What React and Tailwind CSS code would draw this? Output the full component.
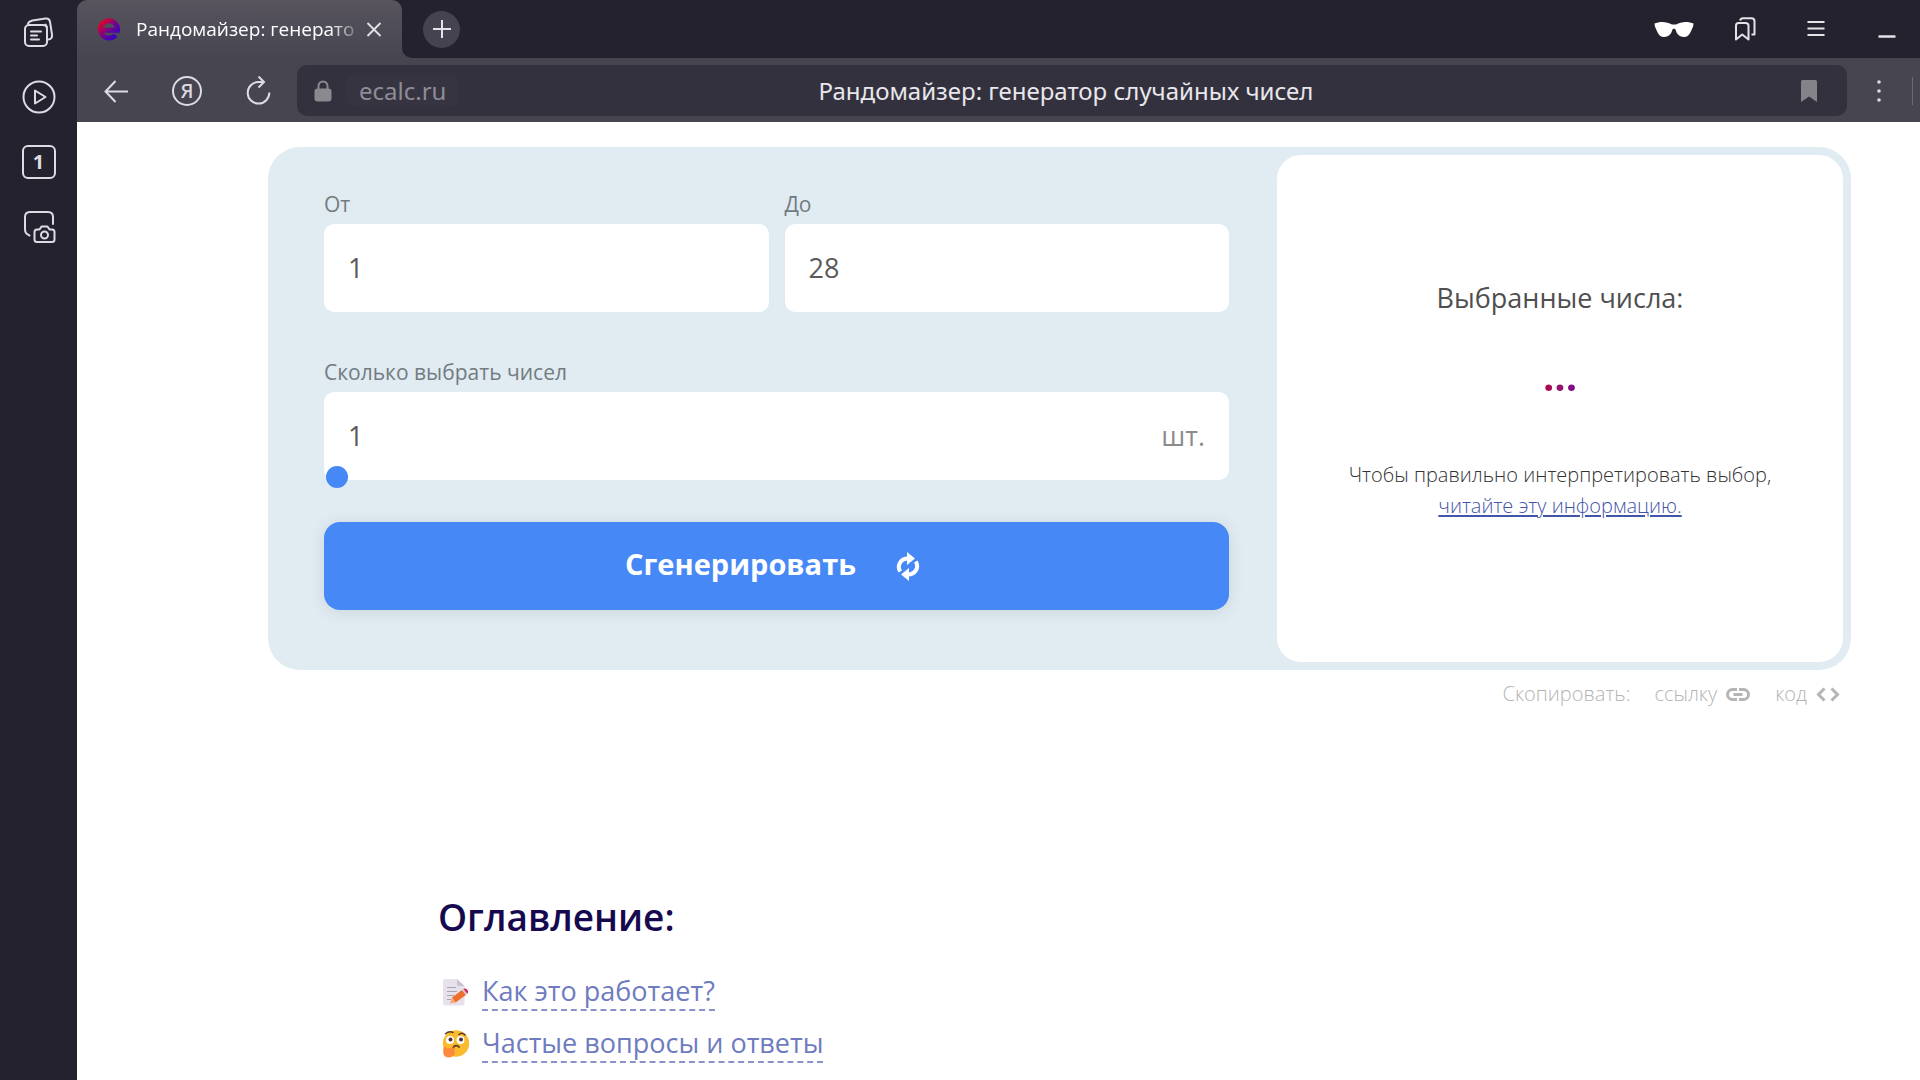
import { useState } from "react";

// ─── Sidebar ───────────────────────────────────────────────────────────────
const SideButton = ({ label, children }) => (
  <button aria-label={label} className="flex h-9 w-9 items-center justify-center text-[#dddbe3]">
    {children}
  </button>
);

const Sidebar = () => (
  <aside className="flex w-[77px] shrink-0 flex-col items-center gap-7 bg-[#24222e] pt-4">
    <SideButton label="Коллекции">
      <svg className="h-9 w-9" viewBox="0 0 36 36" fill="none" stroke="currentColor" strokeWidth="2" strokeLinecap="round" strokeLinejoin="round">
        <rect x="4" y="9" width="22" height="21" rx="4" />
        <path d="M7 7.500C8 5.500 9.500 5 11.500 4.500L24.500 2.600C27 2.400 28.600 3.400 29 5.900L31 18.500C31.400 21.500 30.500 23 27.500 23.600" />
        <path d="M26 11L24.500 8.500" />
        <path d="M10 15.500h10M10 19.500h6M10 23.500h8" />
      </svg>
    </SideButton>
    <SideButton label="Видео">
      <svg className="h-9 w-9" viewBox="0 0 36 36" fill="none" stroke="currentColor" strokeWidth="2" strokeLinejoin="round">
        <circle cx="18" cy="17" r="15.500" />
        <path d="M14 10.500V23.500L24.500 17Z" />
      </svg>
    </SideButton>
    <SideButton label="Вкладки">
      <span className="flex h-[34px] w-[34px] items-center justify-center rounded-[6px] border-2 border-[#dddbe3] font-['Open_Sans','Liberation_Sans',sans-serif] text-xl font-bold leading-none">
        1
      </span>
    </SideButton>
    <SideButton label="Скриншот">
      <svg className="h-9 w-9" viewBox="0 0 36 36" fill="none" stroke="currentColor" strokeWidth="2" strokeLinecap="round" strokeLinejoin="round">
        <path d="M8.500 27.500C5.500 26 4 25 4 21V9C4 5.500 5.500 4 9 4H27C30.500 4 32 5.500 32 9V16" />
        <path d="M16 21.500H18.500L20.500 18.500H26.500L28.500 21.500H31C32.500 21.500 33.500 22.500 33.500 24V31.500C33.500 33 32.500 34 31 34H16C14.500 34 13.500 33 13.500 31.500V24C13.500 22.500 14.500 21.500 16 21.500Z" />
        <circle cx="23.500" cy="27" r="3.500" />
      </svg>
    </SideButton>
  </aside>
);

// ─── Tab strip ─────────────────────────────────────────────────────────────
const SiteLogo = () => (
  <svg className="h-6 w-6 shrink-0" viewBox="0 0 24 24" fill="none">
    <defs>
      <linearGradient id="site-logo" gradientUnits="userSpaceOnUse" x1="3" y1="3" x2="20" y2="20">
        <stop offset="0.150" stopColor="#d8002f" />
        <stop offset="0.600" stopColor="#6a0596" />
        <stop offset="1" stopColor="#3300c4" />
      </linearGradient>
    </defs>
    <path d="M5 13.200H20.500A8.600 8.600 0 1 0 18.500 18" stroke="url(#site-logo)" strokeWidth="5" />
  </svg>
);

const TabStrip = () => (
  <div className="flex h-[58px] bg-[#474550]">
    <div className="bg-[#24222e]">
      <div className="flex h-full w-[325px] items-center rounded-t-[10px] bg-gradient-to-b from-[#57545e] to-[#474550] pl-5 pr-[18px]">
        <SiteLogo />
        <span className="ml-[15px] flex-1 whitespace-nowrap pt-px font-['Open_Sans',sans-serif] text-[19px] font-medium text-white [mask-image:linear-gradient(to_right,#000_85%,transparent)]">
          Рандомайзер: генерато
        </span>
        <button aria-label="Закрыть вкладку" className="text-[#e4e3e8]">
          <svg className="h-5 w-5" viewBox="0 0 20 20" fill="none" stroke="currentColor" strokeWidth="1.800">
            <path d="M3.500 4L16.500 17M16.500 4L3.500 17" />
          </svg>
        </button>
      </div>
    </div>
    <div className="flex flex-1 items-center rounded-bl-[10px] bg-[#24222e] pl-[21px] pr-[23px] text-[#e4e3e8]">
      <button aria-label="Новая вкладка" className="flex h-[37px] w-[37px] items-center justify-center rounded-full bg-[#45434f]">
        <svg className="h-5 w-5" viewBox="0 0 20 20" fill="none" stroke="currentColor" strokeWidth="2">
          <path d="M10 1V19M1 10H19" />
        </svg>
      </button>
      <div className="ml-auto flex items-center">
        <button aria-label="Инкогнито" className="text-white">
          <svg className="h-5 w-10" viewBox="0 0 40 20" fill="currentColor">
            <path d="M0.500 4.500C5 2.200 13 2.200 18 5.500H22C27 2.200 35 2.200 39.500 4.500L39 8C37.500 9.500 36.500 18 30 18C24.500 18 22.500 14 21.500 10.500C21.200 9.500 18.800 9.500 18.500 10.500C17.500 14 15.500 18 10 18C3.500 18 2.500 9.500 1 8Z" />
          </svg>
        </button>
        <button aria-label="Закладки" className="ml-[39px]">
          <svg className="h-6 w-6" viewBox="0 0 24 24" fill="none" stroke="currentColor" strokeWidth="2" strokeLinejoin="round">
            <path d="M3 8.500C3 6.800 4 6 5.500 6H12.500C14.500 6 15.500 6.800 15.500 8.500V22.500L9.200 17.500L3 22.500Z" />
            <path d="M7 3.500C7.500 2 8.500 1.200 10 1.200H18.500C20.500 1.200 21.500 2.200 21.500 4.200V17.500H18.500" />
          </svg>
        </button>
        <button aria-label="Меню" className="ml-[49px]">
          <svg className="h-5 w-5" viewBox="0 0 20 20" fill="none" stroke="currentColor" strokeWidth="2">
            <path d="M1.500 3H18.500M1.500 9.500H18.500M1.500 16H18.500" />
          </svg>
        </button>
        <button aria-label="Свернуть" className="ml-[51px]">
          <svg className="h-5 w-5" viewBox="0 0 20 20" fill="none" stroke="currentColor" strokeWidth="2.500">
            <path d="M1.500 17.500H18.500" />
          </svg>
        </button>
      </div>
    </div>
  </div>
);

// ─── Address bar ───────────────────────────────────────────────────────────
const Toolbar = () => (
  <div className="flex h-16 items-center bg-[#474550] pl-6 pt-px text-[#dddbe3]">
    <button aria-label="Назад">
      <svg className="h-[30px] w-[30px]" viewBox="0 0 30 30" fill="none" stroke="currentColor" strokeWidth="2">
        <path d="M14.500 5L4.500 15.500L14.500 26M4.500 15.500H27" />
      </svg>
    </button>
    <button aria-label="Яндекс" className="ml-[41px] flex h-[30px] w-[30px] items-center justify-center rounded-full border-2 border-[#dddbe3] text-xl font-medium leading-none">
      Я
    </button>
    <button aria-label="Обновить" className="ml-[41px]">
      <svg className="h-[30px] w-[30px]" viewBox="0 0 30 30" fill="none" stroke="currentColor" strokeWidth="2">
        <path d="M20 6H15.500A10.800 10.800 0 1 0 26.300 16.500" />
        <path d="M15.500 0.500L21 6L15.500 11.500" />
      </svg>
    </button>
    <div className="ml-6 grid h-[51px] flex-1 grid-cols-[1fr_auto_1fr] items-center rounded-[10px] bg-[#34313e] pl-[17px] pr-[29px]">
      <div className="flex items-center">
        <svg className="h-[22px] w-[18px] shrink-0 text-[#8b8990]" viewBox="0 0 18 22" fill="none">
          <path d="M4.500 9V6A4.500 4.500 0 0 1 13.500 6V9" stroke="currentColor" strokeWidth="2" />
          <rect x="0.500" y="8.500" width="17" height="13" rx="3" fill="currentColor" />
        </svg>
        <span className="ml-[15px] rounded-lg bg-[#373441] px-3 text-2xl text-[#8f8c97]">ecalc.ru</span>
      </div>
      <span className="text-2xl text-[#e8e7ec]">Рандомайзер: генератор случайных чисел</span>
      <button aria-label="В закладки" className="justify-self-end text-[#85838a]">
        <svg className="h-6 w-[18px]" viewBox="0 0 18 24" fill="currentColor">
          <path d="M1 3C1 1.500 1.800 1 3 1H15C16.200 1 17 1.500 17 3V23L9 17.500L1 23Z" />
        </svg>
      </button>
    </div>
    <button aria-label="Ещё" className="ml-[22px]">
      <svg className="h-6 w-5" viewBox="0 0 20 24" fill="currentColor">
        <circle cx="10" cy="3" r="1.800" />
        <circle cx="10" cy="12" r="1.800" />
        <circle cx="10" cy="21" r="1.800" />
      </svg>
    </button>
    <span className="ml-[23px] mr-[7px] h-7 w-px bg-[#6c6a74]" />
  </div>
);

// ─── Generator form ────────────────────────────────────────────────────────
const Field = ({ id, label, value, onChange, suffix, children }) => (
  <div className="min-w-0 flex-1">
    <label htmlFor={id} className="block text-[21px] leading-7 text-[#737b80]">{label}</label>
    <div className="relative mt-1.5">
      <div className="flex h-[88px] items-center rounded-[10px] bg-white px-6 text-[27px] text-[#5a5a5a]">
        <input id={id} type="text" inputMode="numeric" value={value}
          onChange={(e) => onChange(e.target.value)}
          className="min-w-0 flex-1 bg-transparent outline-none" />
        {suffix && <span className="text-[#8c8c8c]">{suffix}</span>}
      </div>
      {children}
    </div>
  </div>
);

const RefreshIcon = () => (
  <svg className="h-8 w-8" viewBox="0 0 32 32" fill="none" stroke="currentColor" strokeWidth="4">
    <path d="M8.200 21.500C4.500 15 9 8.500 16 8.500" />
    <path d="M23.800 11.500C27.500 18 23 24.500 16 24.500" />
    <path d="M15 2L23 8.500L15 15Z" fill="currentColor" stroke="none" />
    <path d="M17 18L9 24.500L17 31Z" fill="currentColor" stroke="none" />
  </svg>
);

const Generator = () => {
  const [from, setFrom] = useState("1");
  const [to, setTo] = useState("28");
  const [count, setCount] = useState("1");
  const [picked, setPicked] = useState([]);

  const generate = (e) => {
    e.preventDefault();
    const min = Number(from);
    const size = Math.max(Number(to) - min + 1, 1);
    setPicked(Array.from({ length: Number(count) }, () => min + Math.floor(Math.random() * size)));
  };

  return (
    <section className="flex rounded-[32px] bg-[#e0ebf2] py-2 pl-14 pr-2">
      <form onSubmit={generate} className="flex flex-1 flex-col pr-12 pt-[35px]">
        <div className="flex gap-4">
          <Field id="from" label="От" value={from} onChange={setFrom} />
          <Field id="to" label="До" value={to} onChange={setTo} />
        </div>
        <div className="mt-[46px] flex">
          <Field id="count" label="Сколько выбрать чисел" value={count} onChange={setCount} suffix="шт.">
            <input type="range" min="1" max="28" value={count} aria-label="Сколько выбрать чисел"
              onChange={(e) => setCount(e.target.value)}
              className="absolute inset-x-0.5 -bottom-2 h-[22px] appearance-none bg-transparent [&::-webkit-slider-thumb]:h-[22px] [&::-webkit-slider-thumb]:w-[22px] [&::-webkit-slider-thumb]:appearance-none [&::-webkit-slider-thumb]:rounded-full [&::-webkit-slider-thumb]:bg-[#4688f6]" />
          </Field>
        </div>
        <button type="submit"
          className="mt-[42px] flex h-[88px] items-center justify-center gap-9 rounded-2xl bg-[#4688f6] pr-1 text-[29px] font-bold text-white shadow-[0_2px_16px_rgba(60,70,60,0.12)]">
          <span className="pb-1">Сгенерировать</span>
          <RefreshIcon />
        </button>
      </form>

      <div className="flex min-h-[507px] w-[566px] flex-col items-center rounded-[24px] bg-white pt-[123px] text-center">
        <p className="text-[27px] leading-10 text-[#4f4f4f]">Выбранные числа:</p>
        <output className="mt-[33px] bg-gradient-to-r from-[#b00040] to-[#7a0090] bg-clip-text text-[40px] font-bold leading-[50px] text-transparent">
          {picked.length ? picked.join(", ") : "..."}
        </output>
        <p className="mt-[58px] text-xl font-light leading-[31px] text-[#333333]">
          Чтобы правильно интерпретировать выбор,
          <br />
          <a href="#info" className="text-[#4355a8] underline underline-offset-2">читайте эту информацию.</a>
        </p>
      </div>
    </section>
  );
};

const CopyLinks = () => (
  <div className="mt-2.5 flex items-center justify-end pr-2.5 text-xl font-light text-[#b5b5b5]">
    <span>Скопировать:</span>
    <button className="ml-6 flex items-center gap-2">
      ссылку
      <svg className="h-[26px] w-[26px]" viewBox="0 0 26 26" fill="none" stroke="currentColor" strokeWidth="3">
        <path d="M12 8.500H7.500A5 5 0 0 0 7.500 18.500H12M14 8.500H18.500A5 5 0 0 1 18.500 18.500H14M8.500 13.500H17.500" />
      </svg>
    </button>
    <button className="ml-6 flex items-center gap-2">
      код
      <svg className="h-[26px] w-[26px]" viewBox="0 0 26 26" fill="none" stroke="currentColor" strokeWidth="3">
        <path d="M9.500 7.500L3.500 13.500L9.500 19.500M16.500 7.500L22.500 13.500L16.500 19.500" />
      </svg>
    </button>
  </div>
);

// ─── Contents ──────────────────────────────────────────────────────────────
const MemoIcon = () => (
  <svg className="h-7 w-7 shrink-0" viewBox="0 0 28 28" fill="none">
    <path d="M3 1H15L22.500 8V25.500A2 2 0 0 1 20.500 27.500H3A2 2 0 0 1 1 25.500V3A2 2 0 0 1 3 1Z" fill="#e6e1ea" />
    <path d="M15 1V6A2 2 0 0 0 17 8H22.500Z" fill="#c9c1d1" />
    <path d="M5 9.500H14M5 13.500H15M5 17.500H12M5 21.500H9" stroke="#aaa3b5" strokeWidth="1.200" />
    <path d="M10 19.500L20 12L24 17L13.500 24.500Z" fill="#ee6e2d" />
    <path d="M10 19.500L8 25.500L13.500 24.500Z" fill="#f6a878" />
    <path d="M20 12L21.500 11L25.200 15.800L24 17Z" fill="#cfcad4" />
    <path d="M21.500 11C24 9 27.800 13.500 25.200 15.800Z" fill="#dc2250" />
  </svg>
);

const ThinkingIcon = () => (
  <svg className="h-7 w-7 shrink-0" viewBox="0 0 28 28" fill="none">
    <circle cx="14" cy="13.500" r="13.200" fill="#fbbb2e" />
    <circle cx="8" cy="10" r="4" fill="#fff" />
    <circle cx="18.500" cy="10" r="4" fill="#fff" />
    <circle cx="8.500" cy="9.500" r="2" fill="#46332f" />
    <circle cx="19" cy="9.500" r="2" fill="#46332f" />
    <path d="M3.500 3.800C6 1.500 9 1.500 11 2.500M17 4.500C19 2.500 21.500 2.800 23 5" stroke="#5a3a25" strokeWidth="1.500" strokeLinecap="round" />
    <path d="M11 18C12.500 15 15.500 15 17 17" stroke="#5a3a25" strokeWidth="1.800" strokeLinecap="round" />
    <path d="M1.500 18C2.500 16 4.500 16.500 5 18.500L11 17.500C13.500 17.500 13.500 19.500 12 20C14 22 13 27.500 6.500 27.500C2 27.500 0.500 24 1.500 18Z" fill="#fb8b3a" />
  </svg>
);

const contents = [
  { href: "#how", text: "Как это работает?", Icon: MemoIcon },
  { href: "#faq", text: "Частые вопросы и ответы", Icon: ThinkingIcon },
];

const Contents = () => (
  <nav className="ml-[170px] mt-[184px]">
    <h2 className="text-[37px] font-semibold leading-[50px] text-[#16094f]">Оглавление:</h2>
    <ul className="mt-6 pl-1">
      {contents.map(({ href, text, Icon }) => (
        <li key={href} className="flex h-[52px] items-center gap-3">
          <Icon />
          <a href={href} className="border-b-2 border-dashed border-[#8891c9] text-[27px] leading-9 text-[#6f7bc0]">
            {text}
          </a>
        </li>
      ))}
    </ul>
  </nav>
);

export default function App() {
  return (
    <div className="flex min-h-screen bg-white font-['Open_Sans','Noto_Sans',sans-serif]">
      <Sidebar />
      <div className="flex min-w-0 flex-1 flex-col">
        <header className="font-['Noto_Sans','Open_Sans',sans-serif]">
          <TabStrip />
          <Toolbar />
        </header>
        <main className="flex-1 pl-[191px] pr-[69px] pt-[25px]">
          <Generator />
          <CopyLinks />
          <Contents />
        </main>
      </div>
    </div>
  );
}
